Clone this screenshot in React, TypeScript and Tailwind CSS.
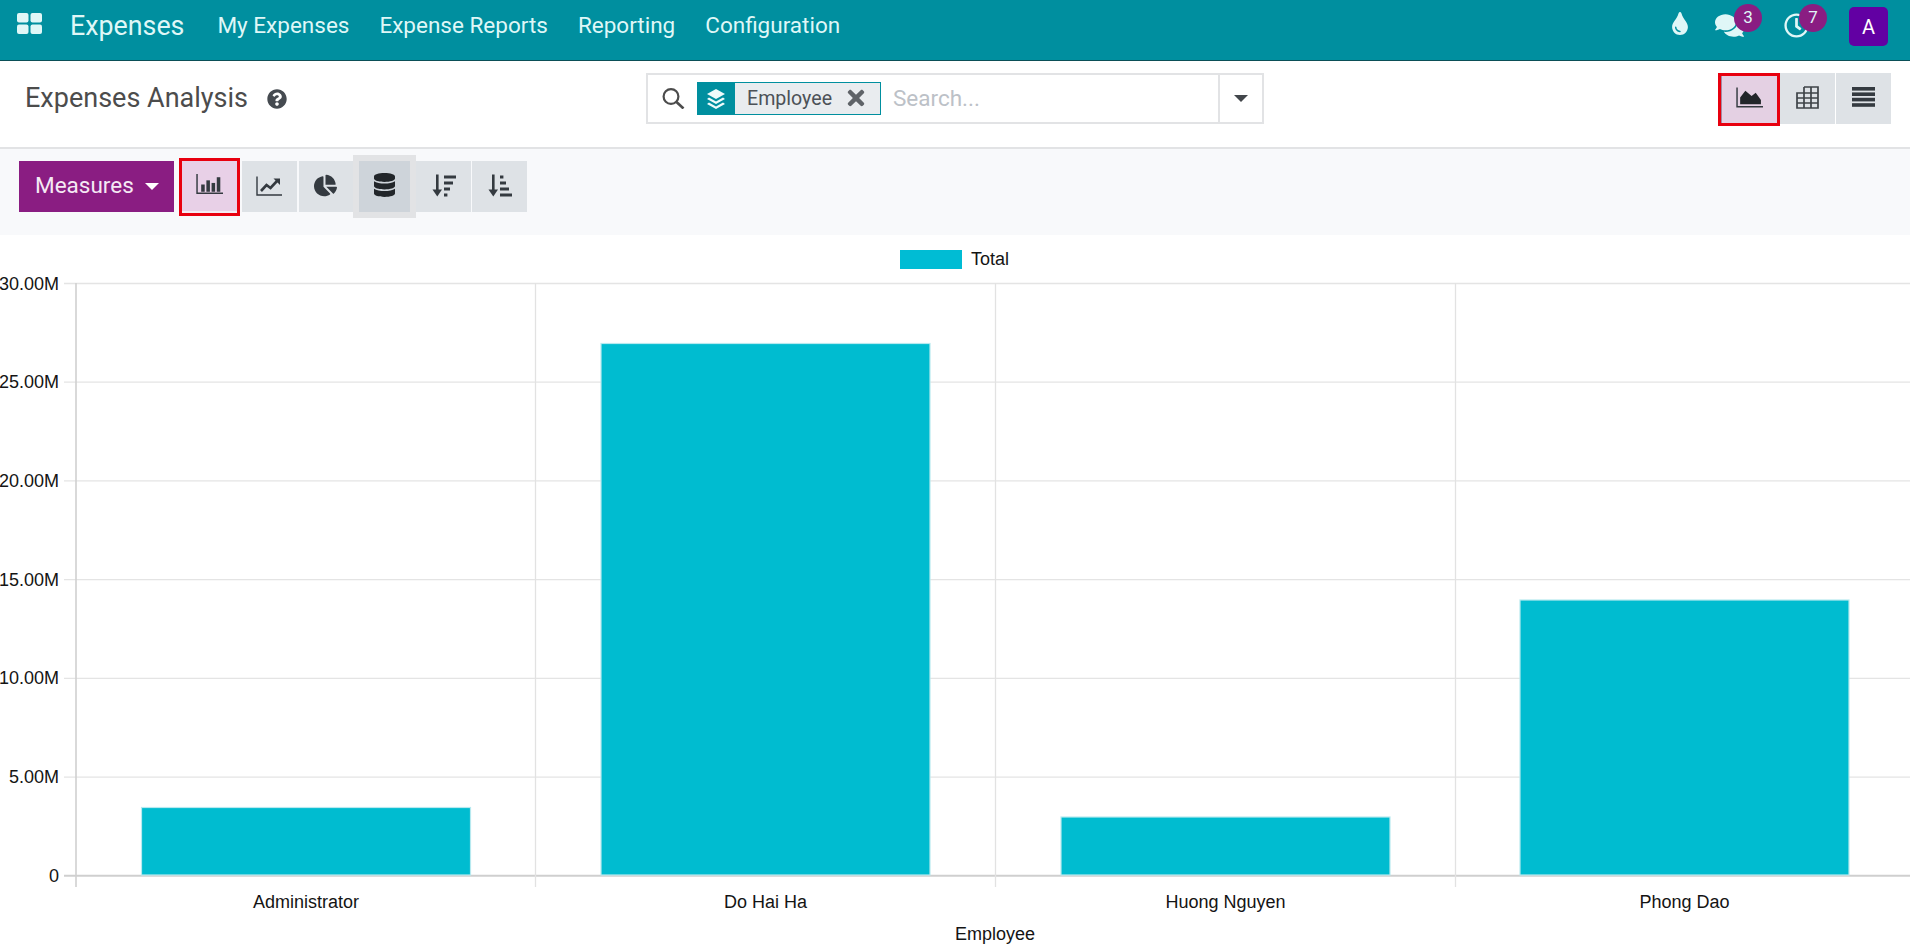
import { FaChartPie, FaComments, FaDatabase, FaQuestionCircle, FaRegClock, FaTimes, FaTint } from "react-icons/fa"

const bars = [
  { x: 141.5, top: 807.5, name: "Administrator" },
  { x: 601, top: 343.5, name: "Do Hai Ha" },
  { x: 1061, top: 817, name: "Huong Nguyen" },
  { x: 1520, top: 600, name: "Phong Dao" },
]
const yTicks = ["30.00M", "25.00M", "20.00M", "15.00M", "10.00M", "5.00M", "0"]

function Caret({ className }: { className: string }) {
  return <span className={`block w-0 h-0 border-x-[7px] border-x-transparent border-t-[7px] ${className}`} />
}

function BarIcon() {
  return (
    <svg width="27" height="21" viewBox="0 0 26 20" fill="#343a40">
      <path d="M1 0V18.5H26" fill="none" stroke="#343a40" strokeWidth="1.4" />
      <rect x="5" y="10" width="3.4" height="7" />
      <rect x="10" y="6" width="3.4" height="11" />
      <rect x="15" y="8.5" width="3.4" height="8.5" />
      <rect x="20" y="3" width="3.4" height="14" />
    </svg>
  )
}

function LineIcon() {
  return (
    <svg width="26" height="21" viewBox="0 0 26 20" fill="#343a40">
      <path d="M1 0V18.5H26" fill="none" stroke="#343a40" strokeWidth="1.4" />
      <path d="M5 14.5L10.5 8.5L14.5 11.5L21 4.5" fill="none" stroke="#343a40" strokeWidth="2.6" />
      <path d="M17.5 2H24V8.5Z" />
    </svg>
  )
}

function SortDownIcon() {
  return (
    <svg width="24" height="24" viewBox="0 0 24 23" fill="#343a40">
      <rect x="4" y="0" width="2.6" height="17" />
      <path d="M0.5 15H10L5.3 22Z" />
      <rect x="12" y="1" width="12" height="3" />
      <rect x="12" y="7" width="9" height="3" />
      <rect x="12" y="13" width="6" height="3" />
      <rect x="12" y="19" width="3.4" height="3" />
    </svg>
  )
}

function SortUpIcon() {
  return (
    <svg width="24" height="24" viewBox="0 0 24 23" fill="#343a40">
      <rect x="4" y="0" width="2.6" height="17" />
      <path d="M0.5 15H10L5.3 22Z" />
      <rect x="12" y="1" width="3.4" height="3" />
      <rect x="12" y="7" width="6" height="3" />
      <rect x="12" y="13" width="9" height="3" />
      <rect x="12" y="19" width="12" height="3" />
    </svg>
  )
}

function AreaIcon() {
  return (
    <svg width="27" height="22" viewBox="0 0 26 20" fill="#22262a">
      <path d="M1 0V18.5H26" fill="none" stroke="#343a40" strokeWidth="1.4" />
      <path d="M4 16V9.5L9 3L15 8L19 5L24 12V16Z" />
    </svg>
  )
}

function TableIcon() {
  return (
    <svg width="23" height="23" viewBox="0 0 23 23" fill="none" stroke="#3f4448" strokeWidth="1.7">
      <path d="M8 1H22V22H1V7H22M8 1V22M15 1V22M1 12H22M1 17H22" />
    </svg>
  )
}

function ListIcon() {
  return (
    <svg width="23" height="20" viewBox="0 0 23 20" fill="#343a40">
      <rect x="0" y="0" width="23" height="3.6" />
      <rect x="0" y="5.4" width="23" height="3.6" />
      <rect x="0" y="10.8" width="23" height="3.6" />
      <rect x="0" y="16.2" width="23" height="3.6" />
    </svg>
  )
}

function GridIcon() {
  return (
    <svg width="25" height="21" viewBox="0 0 25 21" fill="#e0f7f7">
      <rect x="0" y="0" width="11.5" height="9.5" rx="2" />
      <rect x="13.5" y="0" width="11.5" height="9.5" rx="2" />
      <rect x="0" y="11.5" width="11.5" height="9.5" rx="2" />
      <rect x="13.5" y="11.5" width="11.5" height="9.5" rx="2" />
    </svg>
  )
}

function LayersIcon() {
  return (
    <svg width="18" height="20" viewBox="0 0 18 20" fill="#eefbfb">
      <path d="M9 0L18 5L9 10L0 5Z" />
      <path d="M2 8.5L9 12.5L16 8.5L18 10L9 15L0 10Z" />
      <path d="M2 13.5L9 17.5L16 13.5L18 15L9 20L0 15Z" />
    </svg>
  )
}

function SearchIcon() {
  return (
    <svg width="23" height="21" viewBox="0 0 23 21" fill="none" stroke="#4c4c4c" strokeWidth="2.2">
      <circle cx="9" cy="8.5" r="7.4" />
      <path d="M14.5 14L21.5 20.5" strokeWidth="2.6" />
    </svg>
  )
}

function Chart() {
  return (
    <svg className="block w-[1910px] h-[714px]" viewBox="0 235 1910 714" fontFamily="'Liberation Sans', sans-serif" fontSize="18" fill="#141414">
      <rect x="900" y="250" width="62" height="19" fill="#00bcd4" />
      <text x="971" y="265">Total</text>
      {yTicks.map((label, i) => {
        const y = 283.5 + i * 98.72
        return (
          <g key={label}>
            <line x1="64" x2="1910" y1={y} y2={y} stroke={i === 6 ? "#cfcfcf" : "#e4e4e4"} strokeWidth={i === 6 ? 2 : 1.3} />
            <text x="59" y={y + 6} textAnchor="end">{label}</text>
          </g>
        )
      })}
      {[76, 535.5, 995.5, 1455.5].map((x, i) => (
        <line key={x} x1={x} x2={x} y1="283" y2="887" stroke={i === 0 ? "#d0d0d0" : "#e2e2e2"} strokeWidth={i === 0 ? 1.6 : 1.3} />
      ))}
      {bars.map((b) => (
        <g key={b.name}>
          <rect x={b.x} y={b.top} width="329" height={875 - b.top} fill="#00bcd0" stroke="#b7e9ef" strokeWidth="1.2" />
          <text x={b.x + 164.5} y="908" textAnchor="middle">{b.name}</text>
        </g>
      ))}
      <text x="995" y="940" textAnchor="middle">Employee</text>
    </svg>
  )
}

export default function App() {
  return (
    <div className="w-[1910px] h-[949px] overflow-hidden bg-white font-['Roboto',sans-serif]">
      {/* Navbar */}
      <div className="h-[61px] bg-[#008f9f] border-b border-[#0b4f57] flex items-center text-[#dff7f7]">
        <div className="ml-[17px] mb-[13px]">
          <GridIcon />
        </div>
        <div className="ml-[28px] mb-[8px] text-[26.8px]">Expenses</div>
        <div className="ml-[33px] mb-[8px] flex gap-[30px] text-[22.5px]">
          <span>My Expenses</span>
          <span>Expense Reports</span>
          <span>Reporting</span>
          <span>Configuration</span>
        </div>
        <div className="ml-auto flex items-start h-[60px] text-[#e0f7f7]">
          <FaTint className="mt-[12px] w-[18px] h-[23px]" />
          <div className="relative ml-[26px] mt-[12px] w-[29px]">
            <FaComments className="w-[29px] h-[27px]" />
            <span className="absolute left-[19px] -top-[8px] w-[28px] h-[28px] rounded-full bg-[#8a1d82] flex items-center justify-center text-[17px]">3</span>
          </div>
          <div className="relative ml-[40px] mt-[13px] w-[25px]">
            <FaRegClock className="w-[25px] h-[25px]" />
            <span className="absolute left-[15px] -top-[9px] w-[28px] h-[28px] rounded-full bg-[#8a1d82] flex items-center justify-center text-[17px]">7</span>
          </div>
          <div className="ml-[40px] mr-[22px] mt-[7px] w-[39px] h-[39px] rounded-[5px] bg-[#6200a3] text-white flex items-center justify-center text-[20px]">A</div>
        </div>
      </div>

      {/* Control panel header */}
      <div className="h-[88px] border-b-2 border-[#e2e3e5] flex items-start">
        <div className="w-[646px] pl-[25px] pt-[17px] flex items-center text-[27px] text-[#4c4c4c]">
          <span>Expenses Analysis</span>
          <FaQuestionCircle className="ml-[19px] mt-[2px] w-[20px] h-[20px] text-[#454a50]" />
        </div>
        <div className="mt-[12px] w-[618px] h-[51px] border-2 border-[#e2e3e5] flex items-center">
          <div className="ml-[14px]"><SearchIcon /></div>
          <div className="ml-[12px] h-[33px] w-[184px] flex border border-[#008f9f] bg-[#e9ecef] text-[#4c5157]">
            <div className="w-[38px] bg-[#008f9f] flex items-center justify-center -my-px -ml-px">
              <LayersIcon />
            </div>
            <span className="ml-[12px] text-[19.6px] leading-[31px]">Employee</span>
            <FaTimes className="ml-[12px] mt-[3px] w-[24px] h-[24px] text-[#5f6368]" />
          </div>
          <span className="ml-[12px] text-[22.5px] text-[#bcc1c7]">Search...</span>
          <div className="ml-auto h-full w-[44px] border-l-2 border-[#e2e3e5] flex items-center justify-center">
            <Caret className="border-t-[#42464b]" />
          </div>
        </div>
        <div className="ml-auto mr-[19px] mt-[12px] flex items-start">
          <button className="w-[62px] h-[53px] border-[3px] border-[#e8000f] bg-[#e4d0e3] shadow-[inset_1px_0_0_#a58aa4] flex items-center justify-center pb-[3px] pl-[1px]">
            <AreaIcon />
          </button>
          <button className="w-[55px] h-[51px] bg-[#dee2e6] flex items-center justify-center pb-[2px]">
            <TableIcon />
          </button>
          <button className="ml-px w-[55px] h-[51px] bg-[#dee2e6] flex items-center justify-center pb-[3px]">
            <ListIcon />
          </button>
        </div>
      </div>

      {/* Chart toolbar */}
      <div className="h-[86px] bg-[#f8f9fb] pl-[19px] pt-[12px] flex items-start">
        <button className="w-[155px] h-[51px] bg-[#8a1d82] text-[#f5e9f4] text-[22.5px] flex items-center pl-[16px] pb-[1px]">
          <span>Measures</span>
          <Caret className="ml-[11px] border-t-white" />
        </button>
        <button className="ml-[5px] -mt-[3px] w-[61px] h-[58px] border-[3px] border-[#e8000f] bg-[#e8d0e7] shadow-[inset_0_-2px_0_#f3ecf3] flex items-center justify-center pb-[5px]">
          <BarIcon />
        </button>
        <button className="ml-[2px] w-[55px] h-[51px] bg-[#dee2e6] flex items-center justify-center pr-[2px] pb-[1px]">
          <LineIcon />
        </button>
        <button className="ml-[2px] w-[54px] h-[51px] bg-[#dee2e6] flex items-center justify-center pb-[3px] pr-[1px]">
          <FaChartPie className="w-[23px] h-[23px] text-[#343a40]" />
        </button>
        <button className="mx-[6px] w-[51px] h-[51px] bg-[#ced4da] outline-[6px] outline-solid outline-[#e2e3e5] flex items-center justify-center pb-[3px]">
          <FaDatabase className="w-[21px] h-[24px] text-[#22262a]" />
        </button>
        <button className="w-[55px] h-[51px] bg-[#dee2e6] flex items-center justify-center pb-[1px]">
          <SortDownIcon />
        </button>
        <button className="ml-px w-[55px] h-[51px] bg-[#dee2e6] flex items-center justify-center pb-[1px]">
          <SortUpIcon />
        </button>
      </div>

      <Chart />
    </div>
  )
}
